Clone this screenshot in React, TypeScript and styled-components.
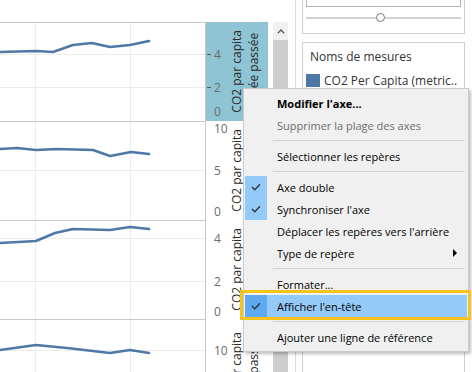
import React from 'react';
import styled, { createGlobalStyle } from 'styled-components';

const GlobalStyle = createGlobalStyle`
  html, body {
    margin: 0;
    padding: 0;
    background: #ffffff;
  }
  body {
    font-family: "Open Sans", "Liberation Sans", sans-serif;
  }
`;

const Screen = styled.div`
  position: relative;
  display: flex;
  width: 472px;
  height: 372px;
  overflow: hidden;
  background: #ffffff;
`;

const Viz = styled.div`
  display: flex;
  flex-direction: column;
  width: 268px;
  flex-shrink: 0;
`;

const VizTop = styled.div`
  height: 22px;
  flex-shrink: 0;
`;

const Pane = styled.div`
  display: flex;
  height: 99px;
  flex-shrink: 0;
`;

const Plot = styled.div`
  box-sizing: border-box;
  width: 206px;
  border-top: 1px solid #c8c8c8;
  border-right: 1px solid #c8c8c8;

  svg {
    display: block;
  }
`;

const AxisCell = styled.div<{ $selected?: boolean }>`
  width: 22px;
  background: ${(p) => (p.$selected ? '#8ec4d3' : '#ffffff')};

  svg {
    display: block;
  }
`;

const HeaderCell = styled.div<{ $selected?: boolean; $shift?: number }>`
  box-sizing: border-box;
  width: 40px;
  display: flex;
  align-items: center;
  overflow: hidden;
  padding-top: ${(p) => p.$shift ?? 0}px;
  background: ${(p) => (p.$selected ? '#8ec4d3' : '#ffffff')};
`;

const HeaderText = styled.div`
  writing-mode: vertical-rl;
  transform: rotate(180deg);
  font-size: 12px;
  line-height: 17px;
  color: #2b2b2b;
  white-space: nowrap;
  text-align: center;
`;

const ScrollColumn = styled.div`
  box-sizing: border-box;
  width: 22px;
  flex-shrink: 0;
  padding: 22px 2px 0 5px;
  display: flex;
  flex-direction: column;
`;

const ScrollArrow = styled.div`
  height: 18px;
  background: #f0f0f0;
  display: flex;
  align-items: center;
  justify-content: center;
`;

const ScrollThumb = styled.div`
  flex: 1;
  background: #cdcdcd;
`;

const Side = styled.div`
  flex: 1;
  display: flex;
  padding-left: 5px;
`;

const SideInner = styled.div`
  flex: 1;
  display: flex;
  flex-direction: column;
  gap: 8px;
  border-left: 1px solid #dcdcdc;
  padding: 0 7px 0 6px;
`;

const Card = styled.div<{ $open?: 'top' | 'bottom' }>`
  box-sizing: border-box;
  border: 1px solid #cfcfcf;
  ${(p) => (p.$open === 'top' ? 'border-top: none;' : '')}
  ${(p) => (p.$open === 'bottom' ? 'border-bottom: none; flex: 1;' : '')}
  background: #ffffff;
`;

const FilterCard = styled(Card)`
  height: 34px;
  padding: 0 3px;
`;

const FilterBox = styled.div`
  height: 7px;
  box-sizing: border-box;
  border: 1px solid #b4b4b4;
  border-top: none;
`;

const SliderTrack = styled.div`
  position: relative;
  height: 2px;
  margin-top: 10px;
  background: #d2d2d2;
`;

const SliderKnob = styled.div`
  position: absolute;
  top: -4px;
  width: 9px;
  height: 9px;
  box-sizing: border-box;
  border: 1px solid #7a7a7a;
  border-radius: 50%;
  background: #ffffff;
`;

const LegendCard = styled(Card)`
  padding: 6px 3px 0 3px;
`;

const LegendTitle = styled.div`
  padding-left: 4px;
  font-size: 12px;
  line-height: 16px;
  color: #333333;
`;

const LegendRow = styled.div`
  display: flex;
  align-items: center;
  gap: 4px;
  margin-top: 8px;
  height: 15px;
`;

const Swatch = styled.div`
  width: 14px;
  height: 13px;
  background: #4e79a7;
`;

const LegendLabel = styled.span`
  font-size: 12px;
  color: #333333;
  white-space: nowrap;
  overflow: hidden;
`;

const Menu = styled.div`
  position: absolute;
  left: 243px;
  top: 88px;
  width: 226px;
  box-sizing: border-box;
  padding: 3px 1px;
  background: #f0f0f0;
  border: 1px solid #cacaca;
  box-shadow: 2px 2px 3px rgba(0, 0, 0, 0.25);
  font-family: "Open Sans", "Liberation Sans", sans-serif;
  font-size: 11px;
`;

const MenuItem = styled.div<{ $active?: boolean; $disabled?: boolean; $bold?: boolean }>`
  display: flex;
  align-items: center;
  height: 22px;
  background: ${(p) => (p.$active ? '#93caf7' : 'transparent')};
  color: ${(p) => (p.$disabled ? '#6d6d6d' : '#000000')};
  font-weight: ${(p) => (p.$bold ? 700 : 400)};
`;

const CheckCell = styled.div<{ $checked?: boolean; $active?: boolean }>`
  width: 22px;
  height: 100%;
  flex-shrink: 0;
  display: flex;
  align-items: center;
  justify-content: center;
  background: ${(p) => (!p.$checked ? 'transparent' : p.$active ? '#5eaaf1' : '#93caf7')};
`;

const ItemLabel = styled.span`
  flex: 1;
  margin-left: 10px;
  white-space: nowrap;
`;

const SubArrow = styled.span`
  width: 0;
  height: 0;
  margin-right: 10px;
  border-left: 4px solid #000000;
  border-top: 4px solid transparent;
  border-bottom: 4px solid transparent;
`;

const Separator = styled.div`
  height: 1px;
  margin: 4px 2px 4px 28px;
  background: #d5d5d5;
`;

// annotation frame drawn over the highlighted menu entry
const Callout = styled.div`
  position: absolute;
  left: 240px;
  top: 290px;
  width: 231px;
  height: 30px;
  box-sizing: border-box;
  border: 3px solid #f8c31a;
`;

type Tick = { label: string; y: number; mark?: boolean };
type PaneData = {
  selected?: boolean;
  headerShift?: number;
  ticks: Tick[];
  grid: number[];
  points: [number, number][];
};

const panes: PaneData[] = [
  {
    selected: true,
    ticks: [
      { label: '4', y: 32, mark: true },
      { label: '2', y: 65, mark: true },
      { label: '0', y: 89 },
    ],
    grid: [32, 65],
    points: [[0, 29], [36, 28], [53, 29], [73, 22], [92, 20], [110, 24], [130, 22], [149, 18]],
  },
  {
    ticks: [
      { label: '10', y: 7 },
      { label: '5', y: 49 },
      { label: '0', y: 90 },
    ],
    grid: [49],
    points: [[0, 27], [17, 26], [36, 28], [57, 27], [93, 28], [110, 34], [131, 30], [149, 32]],
  },
  {
    ticks: [
      { label: '4', y: 18 },
      { label: '2', y: 61 },
      { label: '0', y: 91 },
    ],
    grid: [18, 61],
    points: [[0, 22], [36, 20], [55, 12], [73, 8], [110, 9], [130, 6], [149, 8]],
  },
  {
    headerShift: 10,
    ticks: [{ label: '10', y: 31 }],
    grid: [31],
    points: [[0, 30], [36, 25], [67, 28], [110, 33], [130, 30], [149, 33]],
  },
];

type MenuEntry =
  | { sep: true }
  | { sep?: false; label: string; bold?: boolean; disabled?: boolean; checked?: boolean; active?: boolean; sub?: boolean };

const menu: MenuEntry[] = [
  { label: "Modifier l'axe...", bold: true },
  { label: 'Supprimer la plage des axes', disabled: true },
  { sep: true },
  { label: 'Sélectionner les repères' },
  { sep: true },
  { label: 'Axe double', checked: true },
  { label: "Synchroniser l'axe", checked: true },
  { label: "Déplacer les repères vers l'arrière" },
  { label: 'Type de repère', sub: true },
  { sep: true },
  { label: 'Formater...' },
  { label: "Afficher l'en-tête", checked: true, active: true },
  { sep: true },
  { label: 'Ajouter une ligne de référence' },
];

const Check = () => (
  <svg width="10" height="8" viewBox="0 0 10 8">
    <polyline points="1,4 3.8,6.8 9,1.2" fill="none" stroke="#333" strokeWidth="1.3" />
  </svg>
);

const PaneRow: React.FC<{ pane: PaneData }> = ({ pane }) => (
  <Pane>
    <Plot>
      <svg width="205" height="98">
        <line x1="35.5" y1="0" x2="35.5" y2="98" stroke="#ececec" />
        <line x1="130.5" y1="0" x2="130.5" y2="98" stroke="#ececec" />
        {pane.grid.map((g) => (
          <line key={g} x1="0" y1={g - 0.5} x2="205" y2={g - 0.5} stroke="#ececec" />
        ))}
        <polyline
          points={pane.points.map(([x, y]) => `${x},${y}`).join(' ')}
          fill="none"
          stroke="#4e79a7"
          strokeWidth="2.6"
          strokeLinejoin="round"
          strokeLinecap="round"
        />
      </svg>
    </Plot>
    <AxisCell $selected={pane.selected}>
      <svg width="22" height="99">
        {pane.ticks.map((t) => (
          <g key={t.label}>
            {t.mark && <line x1="1" y1={t.y + 0.5} x2="5" y2={t.y + 0.5} stroke="#555" />}
            <text
              x="8"
              y={t.y}
              dominantBaseline="central"
              fontFamily="Open Sans, Liberation Sans, sans-serif"
              fontSize="12"
              fill="#6b6b6b"
            >
              {t.label}
            </text>
          </g>
        ))}
      </svg>
    </AxisCell>
    <HeaderCell $selected={pane.selected} $shift={pane.headerShift}>
      <HeaderText>
        CO2 par capita
        <br />
        année passée
      </HeaderText>
    </HeaderCell>
  </Pane>
);

const App: React.FC = () => (
  <Screen>
    <GlobalStyle />
    <Viz>
      <VizTop />
      {panes.map((pane, i) => (
        <PaneRow key={i} pane={pane} />
      ))}
    </Viz>
    <ScrollColumn>
      <ScrollArrow>
        <svg width="8" height="5" viewBox="0 0 8 5">
          <polyline points="0.8,4.3 4,1 7.2,4.3" fill="none" stroke="#5a5a5a" strokeWidth="1.3" />
        </svg>
      </ScrollArrow>
      <ScrollThumb />
    </ScrollColumn>
    <Side>
      <SideInner>
        <FilterCard $open="top">
          <FilterBox />
          <SliderTrack>
            <SliderKnob style={{ left: 70 }} />
          </SliderTrack>
        </FilterCard>
        <LegendCard $open="bottom">
          <LegendTitle>Noms de mesures</LegendTitle>
          <LegendRow>
            <Swatch />
            <LegendLabel>CO2 Per Capita (metric..</LegendLabel>
          </LegendRow>
        </LegendCard>
      </SideInner>
    </Side>
    <Menu>
      {menu.map((m, i) =>
        m.sep ? (
          <Separator key={i} />
        ) : (
          <MenuItem key={i} $active={m.active} $disabled={m.disabled} $bold={m.bold}>
            <CheckCell $checked={m.checked} $active={m.active}>
              {m.checked && <Check />}
            </CheckCell>
            <ItemLabel>{m.label}</ItemLabel>
            {m.sub && <SubArrow />}
          </MenuItem>
        )
      )}
    </Menu>
    <Callout />
  </Screen>
);

export default App;
